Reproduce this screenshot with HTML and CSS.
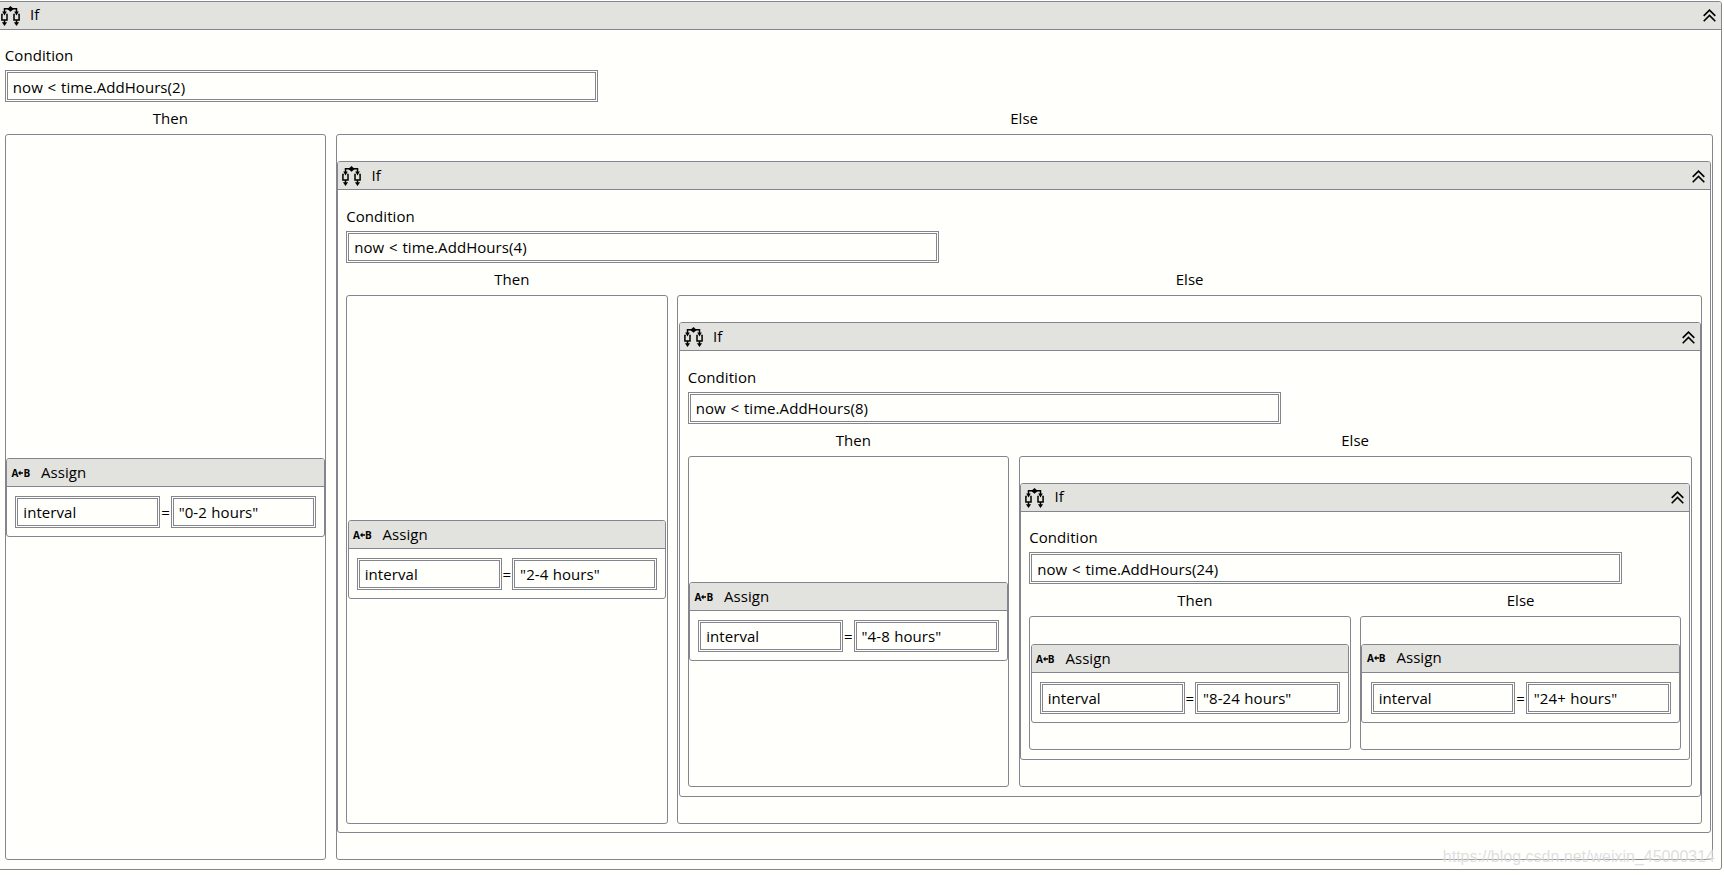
FILE: index.html
```html
<!DOCTYPE html>
<html lang="en">
  <head>
    <meta charset="UTF-8" />
    <meta name="viewport" content="width=device-width, initial-scale=1.0" />
    <title>If</title>
    <link rel="stylesheet" href="styles.css">
  </head>
  <body>
    <!-- Shared icons -->
    <svg class="sprite" width="0" height="0">
      <symbol id="icon-if" viewBox="0 0 19 20">
        <path d="M9.5 0l3.2 2.9-3.2 2.9-3.2-2.9z" />
        <path d="M3.5 6V2.8h12V6" class="line" />
        <path d="M1.2 5.4h4.6L3.5 9.6zM13.2 5.4h4.6l-2.3 4.2z" />
        <path d="M1.8 8.6H.9V14H6V8.6H5.2M13.8 8.6H13V14H18.1V8.6H17.2" class="line" />
        <path d="M3.5 14V18M15.5 14V18" class="line" />
        <path d="M.9 16.2h5.2L3.5 20zM12.9 16.2h5.2L15.5 20z" />
      </symbol>
      <symbol id="icon-collapse" viewBox="0 0 13 13">
        <path d="M.7 6.9l5.8-5.8 5.8 5.8M.7 12.3l5.8-5.8 5.8 5.8" />
      </symbol>
      <symbol id="icon-arrow" viewBox="0 0 6 6">
        <path d="M0 3l3-3v2h3v2H3v2z" />
      </symbol>
    </svg>

    <main class="activity root">
      <div class="header">
        <svg class="icon-if"><use href="#icon-if" /></svg>
        <span class="title">If</span>
        <svg class="collapse"><use href="#icon-collapse" /></svg>
      </div>
      <div class="body">
        <div class="label">Condition</div>
        <div class="field condition">now &lt; time.AddHours(2)</div>
        <div class="branches">
          <div class="branch then">
            <div class="branch-name">Then</div>
            <div class="container">
              <div class="activity">
                <div class="header">
                  <span class="icon-assign">A<svg><use href="#icon-arrow" /></svg>B</span>
                  <span class="title">Assign</span>
                </div>
                <div class="assign">
                  <div class="field">interval</div>
                  <span class="equals">=</span>
                  <div class="field">"0-2 hours"</div>
                </div>
              </div>
            </div>
          </div>
          <div class="branch else">
            <div class="branch-name">Else</div>
            <div class="container">
              <div class="activity">
                <div class="header">
                  <svg class="icon-if"><use href="#icon-if" /></svg>
                  <span class="title">If</span>
                  <svg class="collapse"><use href="#icon-collapse" /></svg>
                </div>
                <div class="body">
                  <div class="label">Condition</div>
                  <div class="field condition">now &lt; time.AddHours(4)</div>
                  <div class="branches">
                    <div class="branch then">
                      <div class="branch-name">Then</div>
                      <div class="container">
                        <div class="activity">
                          <div class="header">
                            <span class="icon-assign">A<svg><use href="#icon-arrow" /></svg>B</span>
                            <span class="title">Assign</span>
                          </div>
                          <div class="assign">
                            <div class="field">interval</div>
                            <span class="equals">=</span>
                            <div class="field">"2-4 hours"</div>
                          </div>
                        </div>
                      </div>
                    </div>
                    <div class="branch else">
                      <div class="branch-name">Else</div>
                      <div class="container">
                        <div class="activity">
                          <div class="header">
                            <svg class="icon-if"><use href="#icon-if" /></svg>
                            <span class="title">If</span>
                            <svg class="collapse"><use href="#icon-collapse" /></svg>
                          </div>
                          <div class="body">
                            <div class="label">Condition</div>
                            <div class="field condition">now &lt; time.AddHours(8)</div>
                            <div class="branches">
                              <div class="branch then">
                                <div class="branch-name">Then</div>
                                <div class="container">
                                  <div class="activity">
                                    <div class="header">
                                      <span class="icon-assign">A<svg><use href="#icon-arrow" /></svg>B</span>
                                      <span class="title">Assign</span>
                                    </div>
                                    <div class="assign">
                                      <div class="field">interval</div>
                                      <span class="equals">=</span>
                                      <div class="field">"4-8 hours"</div>
                                    </div>
                                  </div>
                                </div>
                              </div>
                              <div class="branch else">
                                <div class="branch-name">Else</div>
                                <div class="container">
                                  <div class="activity">
                                    <div class="header">
                                      <svg class="icon-if"><use href="#icon-if" /></svg>
                                      <span class="title">If</span>
                                      <svg class="collapse"><use href="#icon-collapse" /></svg>
                                    </div>
                                    <div class="body">
                                      <div class="label">Condition</div>
                                      <div class="field condition">now &lt; time.AddHours(24)</div>
                                      <div class="branches">
                                        <div class="branch then">
                                          <div class="branch-name">Then</div>
                                          <div class="container">
                                            <div class="activity">
                                              <div class="header">
                                                <span class="icon-assign">A<svg><use href="#icon-arrow" /></svg>B</span>
                                                <span class="title">Assign</span>
                                              </div>
                                              <div class="assign">
                                                <div class="field">interval</div>
                                                <span class="equals">=</span>
                                                <div class="field">"8-24 hours"</div>
                                              </div>
                                            </div>
                                          </div>
                                        </div>
                                        <div class="branch else">
                                          <div class="branch-name">Else</div>
                                          <div class="container">
                                            <div class="activity">
                                              <div class="header">
                                                <span class="icon-assign">A<svg><use href="#icon-arrow" /></svg>B</span>
                                                <span class="title">Assign</span>
                                              </div>
                                              <div class="assign">
                                                <div class="field">interval</div>
                                                <span class="equals">=</span>
                                                <div class="field">"24+ hours"</div>
                                              </div>
                                            </div>
                                          </div>
                                        </div>
                                      </div>
                                    </div>
                                  </div>
                                </div>
                              </div>
                            </div>
                          </div>
                        </div>
                      </div>
                    </div>
                  </div>
                </div>
              </div>
            </div>
          </div>
        </div>
      </div>
    </main>

    <div class="watermark">https://blog.csdn.net/weixin_45000314</div>
  </body>
</html>
```
FILE: styles.css
```css
* {
  box-sizing: border-box;
}

body {
  margin: 0;
  height: 100vh;
  overflow: hidden;
  background-color: #fffffc;
  color: #000;
  font-family: "Open Sans", "Noto Sans", sans-serif;
  font-size: 15px;
  line-height: 20px;
  letter-spacing: 0.06px;
  word-spacing: 0.5px;
}

.sprite {
  position: absolute;
}

.activity {
  border: 1px solid #85858f;
  border-radius: 3px;
  background-color: #fffffc;
}

.root {
  margin: 0.7px 2.3px 0 -4.4px;
}

.header {
  display: flex;
  align-items: center;
  height: 28px;
  padding: 0 5px 0 4.4px;
  border-bottom: 1px solid #85858f;
  border-radius: 2px 2px 0 0;
  background-color: #e2e2df;
}

.icon-if {
  width: 19px;
  height: 20px;
  margin: 1px 10px 0 0;
}

#icon-if .line {
  fill: none;
  stroke: #000;
  stroke-width: 1.5;
}

.title {
  margin-top: -2px;
}

.collapse {
  width: 13px;
  height: 13px;
  margin: 1px 0 0 auto;
  fill: none;
  stroke: #000;
  stroke-width: 1.6;
}

.icon-assign {
  display: flex;
  align-items: center;
  width: 29.5px;
  font-family: "Open Sans", sans-serif;
  font-size: 10px;
  font-weight: bold;
}

.icon-assign svg {
  width: 5px;
  height: 6px;
}

.body {
  padding: 15.5px 8.2px 8.6px;
}

.label {
  margin-bottom: 5px;
}

.field {
  height: 32px;
  padding: 4.5px 5px 0;
  border: 3px double #85858f;
  background-color: #fffffc;
  line-height: 18px;
}

.condition {
  width: 593px;
  word-spacing: 0.8px;
}

.branches {
  display: flex;
  gap: 9.7px;
}

.branch {
  display: flex;
  flex-direction: column;
}

.then {
  width: 321.3px;
  flex-shrink: 0;
}

.else {
  flex: 1;
}

.branch-name {
  height: 32px;
  line-height: 33px;
  text-align: center;
}

.then > .branch-name {
  padding-left: 10px;
}

.container {
  flex: 1;
  display: flex;
  flex-direction: column;
  justify-content: center;
  padding: 26.2px 0.3px 26.1px;
  border: 1px solid #85858f;
  border-radius: 3px;
}

.then > .container {
  padding-top: 27px;
}

.assign {
  display: flex;
  padding: 8.7px 8.2px 8.3px;
}

.assign .field {
  flex: 1;
}

.equals {
  width: 10.4px;
  text-align: center;
  line-height: 32px;
}

.watermark {
  position: absolute;
  right: 9px;
  bottom: 8px;
  color: rgba(190, 190, 190, 0.5);
  font-family: "Liberation Sans", Arial, sans-serif;
  font-size: 16px;
  letter-spacing: 0;
  text-shadow: 0 0 2px #fff;
}
```
